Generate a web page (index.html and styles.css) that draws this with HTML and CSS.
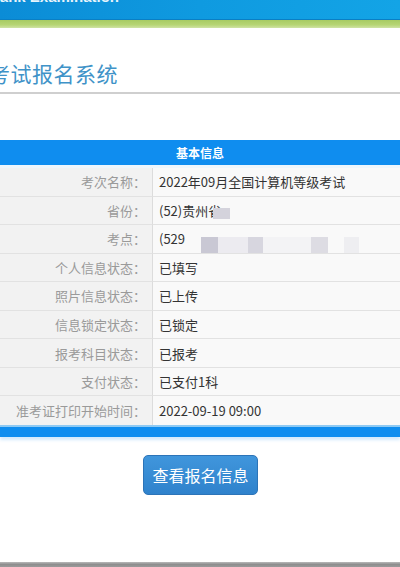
FILE: index.html
```html
<!DOCTYPE html>
<html lang="zh">
<head>
<meta charset="utf-8">
<title>考试报名系统</title>
<link rel="stylesheet" href="styles.css">
</head>
<body>
<header class="top">
  <div class="brand">Rank Examination</div>
</header>
<div class="band"></div>
<main class="page">
  <h1 class="title">考试报名系统</h1>
  <section class="info">
    <div class="info-head">基本信息</div>
    <div class="rows">
      <div class="label">考次名称：</div><div class="value">2022年09月全国计算机等级考试</div>
      <div class="label">省份：</div><div class="value">(52)贵州省<span class="mosaic m-prov"></span></div>
      <div class="label">考点：</div><div class="value">(529<span class="mosaic m1"></span><span class="mosaic m2"></span><span class="mosaic m3"></span><span class="mosaic m4"></span><span class="mosaic m5"></span><span class="mosaic m6"></span></div>
      <div class="label">个人信息状态：</div><div class="value">已填写</div>
      <div class="label">照片信息状态：</div><div class="value">已上传</div>
      <div class="label">信息锁定状态：</div><div class="value">已锁定</div>
      <div class="label">报考科目状态：</div><div class="value">已报考</div>
      <div class="label">支付状态：</div><div class="value">已支付1科</div>
      <div class="label">准考证打印开始时间：</div><div class="value">2022-09-19 09:00</div>
    </div>
    <div class="info-foot"></div>
  </section>
  <div class="actions">
    <button class="btn" type="button">查看报名信息</button>
  </div>
</main>
<div class="bottom-bar"></div>
</body>
</html>
```
FILE: styles.css
```css
* { box-sizing: border-box; }
html, body { margin: 0; padding: 0; }
body {
  width: 400px;
  height: 567px;
  overflow: hidden;
  background: #ffffff;
  font-family: "Noto Sans CJK SC", "Liberation Sans", sans-serif;
  display: flex;
  flex-direction: column;
}
.top {
  height: 20px;
  background: linear-gradient(90deg, #0b8cd6 0%, #0f9ae0 50%, #13a4e6 100%);
  border-bottom: 1px solid #0a7fc4;
  overflow: hidden;
}
.brand {
  margin-top: -12px;
  margin-left: -11px;
  font-family: "Liberation Sans", sans-serif;
  font-weight: bold;
  font-size: 15px;
  line-height: 18px;
  color: #e6f4fc;
}
.band {
  height: 8px;
  background: linear-gradient(180deg, #a7cb63 0%, #b6d574 60%, #cfe3a4 100%);
}
.page {
  flex: 1;
  display: flex;
  flex-direction: column;
}
.title {
  margin: 30px 0 0 -11px;
  padding: 0 0 4px 0;
  font-size: 21px;
  line-height: 30px;
  font-weight: normal;
  color: #3f93c8;
  letter-spacing: 0.5px;
  border-bottom: 2px solid #cfcfcf;
}
.info {
  margin-top: 46px;
}
.info-head {
  height: 25px;
  background: #0f8def;
  color: #ffffff;
  font-size: 12px;
  font-weight: bold;
  line-height: 25px;
  text-align: center;
  border-bottom: 3px solid #eef6fc;
  height: 28px;
}
.rows {
  display: grid;
  grid-template-columns: 153px 1fr;
  grid-auto-rows: 28.55px;
  background: #f4f4f4;
}
.label, .value {
  border-bottom: 1px solid #e2e2e2;
  font-size: 13px;
  display: flex;
  align-items: center;
  white-space: nowrap;
  overflow: hidden;
}
.label {
  justify-content: flex-end;
  padding-right: 6px;
  color: #9a9a9a;
  background: #f2f2f2;
  border-right: 1px solid #dcdcdc;
}
.value {
  padding-left: 6px;
  color: #333333;
  background: #f9f9f9;
}
.rows > :nth-last-child(-n+2) { border-bottom: none; }
.mosaic {
  display: inline-block;
  height: 16px;
  align-self: flex-end;
}
.m-prov {
  width: 17px;
  height: 11px;
  margin-left: -8px;
  align-self: flex-end;
  margin-bottom: 5px;
  background: #d4d3dc;
}
.m1 { width: 17px; margin-left: 16px; background: #c9c8d4; margin-bottom: 0; }
.m2 { width: 30px; background: #ecebf0; }
.m3 { width: 15px; background: #d7d6df; }
.m4 { width: 48px; background: #f3f3f5; }
.m5 { width: 17px; background: #dddce3; }
.m6 { width: 15px; margin-left: 16px; background: #eeeef1; }
.info-foot {
  height: 12px;
  background: #0f8def;
  border-top: 2px solid #8fcaf3;
  box-shadow: 0 3px 3px rgba(15, 141, 239, 0.18);
}
.actions {
  display: flex;
  justify-content: center;
  margin-top: 18px;
  padding-left: 1px;
}
.btn {
  width: 115px;
  height: 40px;
  border: 1px solid #2c74b8;
  border-radius: 5px;
  background: linear-gradient(180deg, #4096dc 0%, #2f82cc 100%);
  color: #ffffff;
  font-family: "Noto Sans CJK SC", sans-serif;
  font-size: 16px;
  padding: 0;
  margin: 0;
}
.bottom-bar {
  height: 5px;
  background: linear-gradient(180deg, #b9b9b9 0%, #8e8e8e 50%, #9a9a9a 100%);
}
```
